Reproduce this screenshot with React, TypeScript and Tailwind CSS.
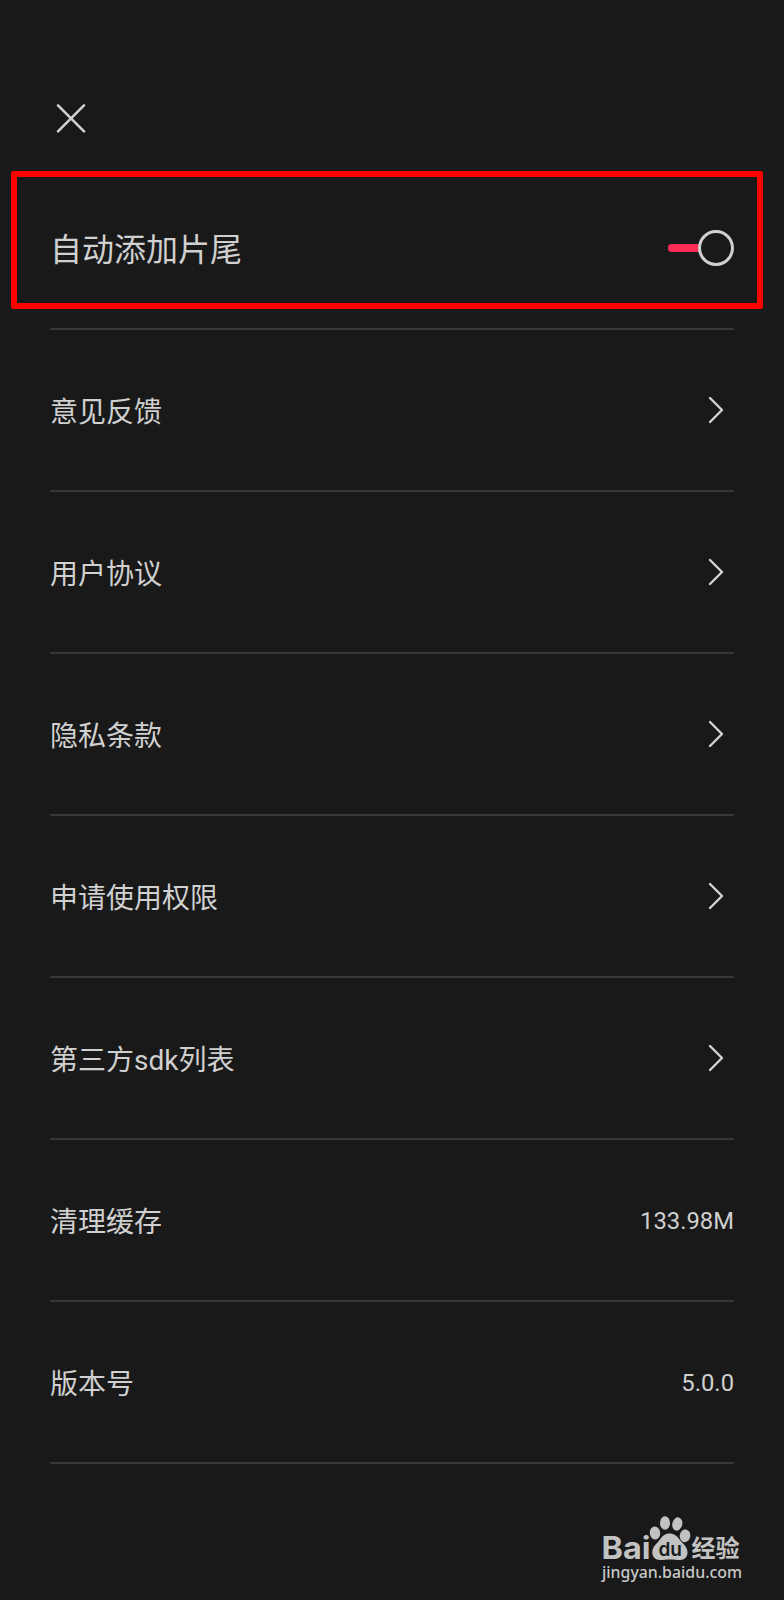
// App.tsx
import type { ReactNode } from "react";

type Item = {
  label: string;
  value?: string;
};

const items: Item[] = [
  { label: "意见反馈" },
  { label: "用户协议" },
  { label: "隐私条款" },
  { label: "申请使用权限" },
  { label: "第三方sdk列表" },
  { label: "清理缓存", value: "133.98M" },
  { label: "版本号", value: "5.0.0" },
];

function CloseIcon() {
  return (
    <svg className="h-8 w-8" viewBox="0 0 32 32" fill="none" stroke="#d0d0d0" strokeWidth="2.6" strokeLinecap="round">
      <path d="M3 3.300L29 29.300M29 3.300L3 29.300" />
    </svg>
  );
}

function ChevronIcon() {
  return (
    <svg className="mr-2 h-8 w-5" viewBox="0 0 20 32" fill="none" stroke="#d4d4d4" strokeWidth="2.4" strokeLinecap="round" strokeLinejoin="round">
      <path d="M4 4L16 16L4 28" />
    </svg>
  );
}

function Toggle() {
  return (
    <button type="button" role="switch" aria-checked="true" className="flex items-center">
      <span className="h-2 w-[31px] rounded-l-full bg-[#fe2c55]" />
      <span className="-ml-px h-9 w-9 rounded-full border-3 border-[#d0d0d0] bg-[#191919]" />
    </button>
  );
}

function Row({ children }: { children: ReactNode }) {
  return (
    <div className="flex h-[162px] items-center justify-between border-b-2 border-[#383838]">{children}</div>
  );
}

// Baidu paw with the "du" knocked out of the pad
function PawLogo() {
  return (
    <svg className="h-[47px] w-[139px] overflow-visible" viewBox="0 0 139 47" fill="#c2c2c2">
      <text x="-0.500" y="44" fontFamily="Inter, sans-serif" fontWeight="700" fontSize="31" textLength="49" lengthAdjust="spacingAndGlyphs">Bai</text>
      <ellipse cx="53" cy="18" rx="5.200" ry="6.500" transform="rotate(-6 53 18)" />
      <ellipse cx="63" cy="8" rx="5" ry="6.800" />
      <ellipse cx="75.300" cy="9" rx="5" ry="6.700" transform="rotate(12 75.300 9)" />
      <ellipse cx="83" cy="20.800" rx="5.300" ry="6.400" transform="rotate(8 83 20.800)" />
      <path d="M67.500 18.500C72 18.500 75 21 77.500 24.500C80.500 28.500 85.500 31.500 85.500 37.500C85.500 42 82.500 45 78 45C74.500 45 72 44.500 68 44.500C64 44.500 61.500 45 58 45C53.500 45 50.300 42 50.300 37.500C50.300 31.500 55 28.500 58 24.500C60.500 21 63 18.500 67.500 18.500Z" />
      <text x="56.500" y="40.500" fill="#191919" fontFamily="Inter, sans-serif" fontWeight="600" fontSize="19" textLength="23.500" lengthAdjust="spacingAndGlyphs">du</text>
      <text x="89.500" y="42" fontFamily="'Noto Sans CJK SC', sans-serif" fontWeight="700" fontSize="24" textLength="48" lengthAdjust="spacingAndGlyphs">经验</text>
    </svg>
  );
}

export default function App() {
  return (
    <div className="h-[1600px] w-[784px] bg-[#191919] font-[Roboto,'Noto_Sans_CJK_SC',sans-serif] text-[#d0d0d0]">
      <header className="flex h-[168px] items-end px-[55px] pb-[34px]">
        <button type="button" aria-label="关闭">
          <CloseIcon />
        </button>
      </header>

      <main className="relative px-[50px]">
        {/* highlight frame around the first setting */}
        <div className="pointer-events-none absolute top-[3px] left-[11px] h-[138px] w-[752px] rounded-[2px] border-[6px] border-[#ff0000]" />

        <Row>
          <span className="pt-1 text-[32px]">自动添加片尾</span>
          <Toggle />
        </Row>

        {items.map((item) => (
          <Row key={item.label}>
            <span className="pt-1.5 text-[28px]">{item.label}</span>
            {item.value ? <span className="pt-1 text-[23.8px]">{item.value}</span> : <ChevronIcon />}
          </Row>
        ))}
      </main>

      <footer className="flex flex-col items-end pt-[51px] pr-[43px]">
        <PawLogo />
        <svg className="h-6 w-[139px] overflow-visible" viewBox="0 0 139 24" fill="#c8c8c8">
          <text x="0" y="15.500" fontFamily="'Noto Sans', sans-serif" fontWeight="500" fontSize="17" textLength="140" lengthAdjust="spacingAndGlyphs">jingyan.baidu.com</text>
        </svg>
      </footer>
    </div>
  );
}
